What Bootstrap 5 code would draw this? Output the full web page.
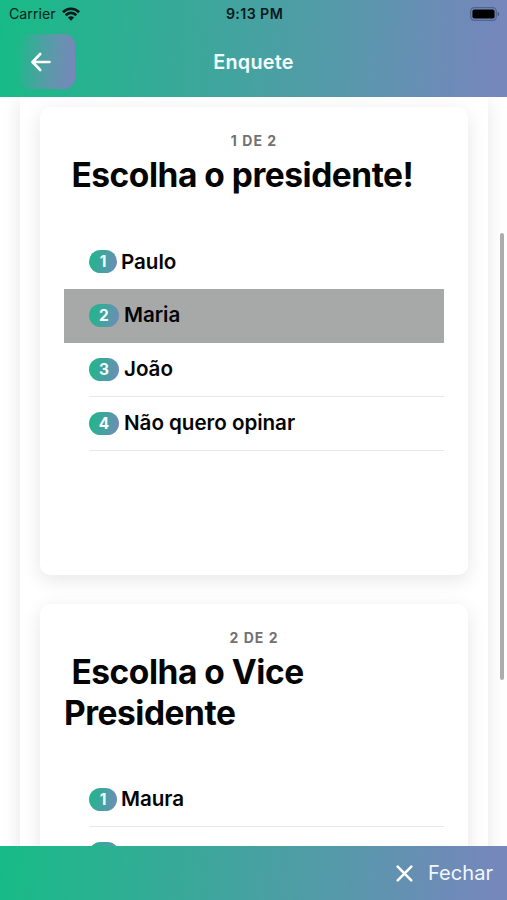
<!DOCTYPE html>
<html lang="pt-BR">
<head>
<meta charset="utf-8">
<meta name="viewport" content="width=device-width, initial-scale=1">
<title>Enquete</title>
<link rel="stylesheet" href="https://cdn.jsdelivr.net/npm/bootstrap@5.3.0/dist/css/bootstrap.min.css">
<style>
  :root { --brand: linear-gradient(93deg, #17bb86 0%, #5699aa 67%, #6d8bb7 88%, #7787bc 100%); }
  body { font-family: Inter, "Liberation Sans", sans-serif; color: #050505; font-kerning: normal; }
  .brand-bg { background: var(--brand); }
  .app-header { height: 97px; z-index: 2; }
  .status { height: 28px; padding: 0 7px 0 9px; font-size: 14.2px; color: #06211d; }
  .status .clock { font-weight: 600; letter-spacing: .4px; color: #08191b; }
  .toolbar { height: 69px; }
  .back-btn { width: 56px; height: 55px; margin: -2px 0 0 19px; border-radius: 11px; border: 0;
    background: linear-gradient(95deg, #1fb88a 0%, #5f97ac 60%, #7a86bb 100%); }
  .back-icon { margin-right: 12px; }
  .page-title { font-size: 19.8px; font-weight: 600; letter-spacing: .25px; color: #f4ffff; }
  .app-content { background: #fff; min-height: 0; }
  .outer-panel { width: 468px; margin-left: 20px; padding: 10px 20px 0; box-shadow: 0 4px 19px rgba(0,0,0,.1); }
  .poll { height: 468px; margin-bottom: 29px; border: 0; border-radius: 10px; padding: 25px 24px 0;
    box-shadow: 0 5px 19px rgba(0,0,0,.1); }
  .step { font-size: 14px; line-height: 18px; font-weight: 700; letter-spacing: 1.05px; color: #727272; }
  .question { font-size: 33.5px; line-height: 40.6px; font-weight: 700; letter-spacing: -.48px; margin: 5px 0 40px; white-space: pre-wrap; }
  .options .option { height: 53.75px; padding: 0 0 0 25px; border: 0; border-radius: 0; color: #050505; }
  .option-body { border-bottom: 1px solid #e8e8e8; font-size: 20.6px; font-weight: 600; letter-spacing: -.04px; }
  .options .option.chosen { background: #a7a9a8; }
  .chosen .option-body, .no-line .option-body { border-color: transparent; }
  .tag { height: 23px; width: 30px; margin-right: 5px; font-size: 15.5px; font-weight: 700; letter-spacing: 0; color: #f2fffc;
    background: linear-gradient(100deg, #1cb888 0%, #4b9fa4 58%, #7489bb 100%); }
  .tag.slim { width: 28px; margin-right: 4px; }
  .scroll-thumb { left: 500px; top: 233px; width: 4px; height: 447px; border-radius: 2px; background: #acacac; z-index: 3; }
  .app-footer { height: 54px; padding-right: 14px; z-index: 2; font-size: 20.1px; color: #f2f7ff; }
  .close-icon { margin-right: 15px; }
</style>
<script src="https://cdn.jsdelivr.net/npm/bootstrap@5.3.0/dist/js/bootstrap.bundle.min.js"></script>
</head>
<body class="vh-100 overflow-hidden d-flex flex-column position-relative">
  <header class="app-header brand-bg flex-shrink-0 position-relative">
    <div class="status row g-0 align-items-center">
      <div class="col d-flex align-items-center">
        <span>Carrier</span>
        <svg class="wifi" style="margin-left:6px" width="18" height="14" viewBox="0 0 18 14" fill="none" stroke="#061a18" stroke-width="2.7">
          <path d="M.9 5.2C5.4.6 12.6.6 17.1 5.2M3.7 8.2c3-3 7.6-3 10.6 0"/>
          <path d="M9 13.7 5.9 10.5c1.8-1.7 4.4-1.7 6.2 0z" fill="#061a18" stroke="none"/>
        </svg>
      </div>
      <div class="col-auto clock">9:13 PM</div>
      <div class="col d-flex justify-content-end">
        <svg width="30" height="14" viewBox="0 0 30 14">
          <rect x=".7" y=".7" width="25.6" height="12.6" rx="3.8" fill="none" stroke="#4f658d" stroke-width="1.3"/>
          <rect x="2.4" y="2.4" width="22.2" height="9.2" rx="2" fill="#000"/>
          <path d="M27.7 4.7c2.1.8 2.1 3.8 0 4.6z" fill="#465b80"/>
        </svg>
      </div>
    </div>
    <div class="toolbar row g-0 align-items-center">
      <div class="col">
        <button class="back-btn btn p-0 d-flex align-items-center justify-content-center" aria-label="Voltar">
          <svg class="back-icon" width="20" height="20" viewBox="0 0 20 20" fill="none" stroke="#fff" stroke-width="2.6" stroke-linecap="round" stroke-linejoin="round">
            <path d="M9.2 2 1.5 10l7.7 8M1.8 10h16.7"/>
          </svg>
        </button>
      </div>
      <h1 class="page-title col-auto m-0">Enquete</h1>
      <div class="col"></div>
    </div>
  </header>

  <main class="app-content flex-grow-1 overflow-hidden">
    <div class="outer-panel">
      <section class="card poll">
        <div class="step text-center">1 DE 2</div>
        <h2 class="question"> Escolha o presidente!</h2>
        <div class="list-group list-group-flush options">
          <div class="list-group-item option no-line"><div class="option-body h-100 d-flex align-items-center"><span class="tag slim rounded-pill d-flex align-items-center justify-content-center">1</span>Paulo</div></div>
          <div class="list-group-item option chosen"><div class="option-body h-100 d-flex align-items-center"><span class="tag rounded-pill d-flex align-items-center justify-content-center">2</span>Maria</div></div>
          <div class="list-group-item option"><div class="option-body h-100 d-flex align-items-center"><span class="tag rounded-pill d-flex align-items-center justify-content-center">3</span>João</div></div>
          <div class="list-group-item option"><div class="option-body h-100 d-flex align-items-center"><span class="tag rounded-pill d-flex align-items-center justify-content-center">4</span>Não quero opinar</div></div>
        </div>
      </section>
      <section class="card poll">
        <div class="step text-center">2 DE 2</div>
        <h2 class="question"> Escolha o Vice
Presidente</h2>
        <div class="list-group list-group-flush options">
          <div class="list-group-item option"><div class="option-body h-100 d-flex align-items-center"><span class="tag slim rounded-pill d-flex align-items-center justify-content-center">1</span>Maura</div></div>
          <div class="list-group-item option"><div class="option-body h-100 d-flex align-items-center"><span class="tag rounded-pill"></span></div></div>
        </div>
      </section>
    </div>
  </main>
  <div class="scroll-thumb position-absolute"></div>

  <footer class="app-footer brand-bg flex-shrink-0 position-relative d-flex align-items-center justify-content-end">
    <svg class="close-icon" width="17" height="17" viewBox="0 0 17 17" fill="none" stroke="#fff" stroke-width="2.6" stroke-linecap="round">
      <path d="M1.7 1.7l13.6 13.6M15.3 1.7l-13.6 13.6"/>
    </svg>
    <span>Fechar</span>
  </footer>
</body>
</html>
